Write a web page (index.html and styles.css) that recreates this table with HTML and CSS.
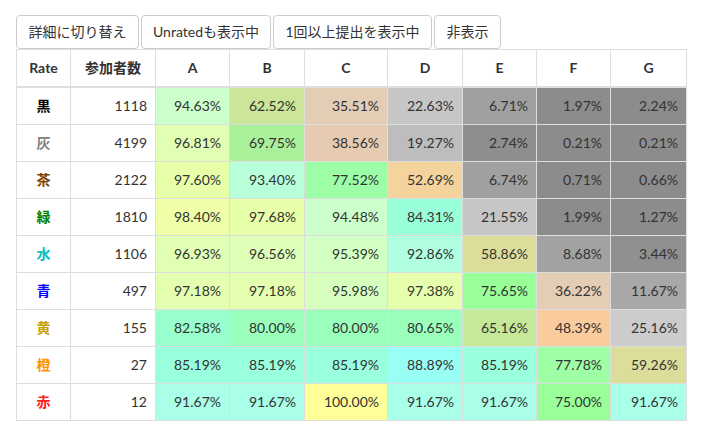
FILE: index.html
```html
<!DOCTYPE html>
<html lang="ja">
<head>
<meta charset="utf-8">
<link rel="stylesheet" href="styles.css">
</head>
<body>
<div class="page">
  <div class="toolbar">
    <button class="btn w1">詳細に切り替え</button>
    <button class="btn w2">Unratedも表示中</button>
    <button class="btn w3">1回以上提出を表示中</button>
    <button class="btn w4">非表示</button>
  </div>
  <table class="stats">
    <colgroup>
      <col class="c-rate"><col class="c-num"><col class="c-a"><col class="c-b"><col class="c-c"><col class="c-d"><col class="c-e"><col class="c-f"><col class="c-g">
    </colgroup>
    <thead>
      <tr><th>Rate</th><th>参加者数</th><th>A</th><th>B</th><th>C</th><th>D</th><th>E</th><th>F</th><th>G</th></tr>
    </thead>
    <tbody>
      <tr><td class="rate r-black">黒</td><td class="num">1118</td>
        <td class="p9463">94.63%</td><td class="p6252">62.52%</td><td class="p3551">35.51%</td><td class="p2263">22.63%</td><td class="p671">6.71%</td><td class="p0">1.97%</td><td class="p0">2.24%</td></tr>
      <tr><td class="rate r-gray">灰</td><td class="num">4199</td>
        <td class="p9681">96.81%</td><td class="p6975">69.75%</td><td class="p3856">38.56%</td><td class="p1927">19.27%</td><td class="p274">2.74%</td><td class="p0">0.21%</td><td class="p0">0.21%</td></tr>
      <tr><td class="rate r-brown">茶</td><td class="num">2122</td>
        <td class="p9760">97.60%</td><td class="p9340">93.40%</td><td class="p7752">77.52%</td><td class="p5269">52.69%</td><td class="p671">6.74%</td><td class="p0">0.71%</td><td class="p0">0.66%</td></tr>
      <tr><td class="rate r-green">緑</td><td class="num">1810</td>
        <td class="p9840">98.40%</td><td class="p9760">97.68%</td><td class="p9463">94.48%</td><td class="p8431">84.31%</td><td class="p2263">21.55%</td><td class="p0">1.99%</td><td class="p0">1.27%</td></tr>
      <tr><td class="rate r-cyan">水</td><td class="num">1106</td>
        <td class="p9681">96.93%</td><td class="p9656">96.56%</td><td class="p9539">95.39%</td><td class="p9286">92.86%</td><td class="p5886">58.86%</td><td class="p868">8.68%</td><td class="p344">3.44%</td></tr>
      <tr><td class="rate r-blue">青</td><td class="num">497</td>
        <td class="p9718">97.18%</td><td class="p9718">97.18%</td><td class="p9598">95.98%</td><td class="p9738">97.38%</td><td class="p7565">75.65%</td><td class="p3551">36.22%</td><td class="p1167">11.67%</td></tr>
      <tr><td class="rate r-yellow">黄</td><td class="num">155</td>
        <td class="p8258">82.58%</td><td class="p8000">80.00%</td><td class="p8000">80.00%</td><td class="p8000">80.65%</td><td class="p6516">65.16%</td><td class="p4839">48.39%</td><td class="p2516">25.16%</td></tr>
      <tr><td class="rate r-orange">橙</td><td class="num">27</td>
        <td class="p8519">85.19%</td><td class="p8519">85.19%</td><td class="p8519">85.19%</td><td class="p8889">88.89%</td><td class="p8519">85.19%</td><td class="p7778">77.78%</td><td class="p5886">59.26%</td></tr>
      <tr><td class="rate r-red">赤</td><td class="num">12</td>
        <td class="p9167">91.67%</td><td class="p9167">91.67%</td><td class="p10000">100.00%</td><td class="p9167">91.67%</td><td class="p9167">91.67%</td><td class="p7565">75.00%</td><td class="p9167">91.67%</td></tr>
    </tbody>
  </table>
</div>
</body>
</html>
```

FILE: styles.css
```css
html, body {
  margin: 0;
  padding: 0;
  background: #fff;
}
body {
  font-family: Lato, "Noto Sans CJK JP", sans-serif;
  font-size: 14px;
  line-height: 20px;
  color: #333;
}
.page {
  padding: 15px 0 0 16px;
}
.toolbar {
  display: flex;
  gap: 2px;
  height: 34px;
}
.btn {
  box-sizing: border-box;
  height: 34px;
  padding: 6px 0;
  font-family: Lato, "Noto Sans CJK JP", sans-serif;
  font-size: 14px;
  line-height: 20px;
  color: #333;
  background: #fff;
  border: 1px solid #ccc;
  border-radius: 4px;
  text-align: center;
}
.w1 { width: 123px; }
.w2 { width: 130px; }
.w3 { width: 159px; }
.w4 { width: 67px; }

.stats {
  border-collapse: collapse;
  table-layout: fixed;
  width: 670px;
}
.c-rate { width: 54px; }
.c-num { width: 85px; }
.c-a { width: 74px; }
.c-b { width: 75px; }
.c-c { width: 83px; }
.c-d { width: 75px; }
.c-e { width: 74px; }
.c-f { width: 74px; }
.c-g { width: 76px; }

.stats th, .stats td {
  border: 1px solid #ddd;
  padding: 8px;
  line-height: 20px;
  white-space: nowrap;
}
.stats th {
  text-align: center;
  font-weight: bold;
  border-bottom-width: 2px;
}
.stats td {
  text-align: right;
}
.stats td.rate {
  text-align: center;
  font-weight: bold;
}
.r-black { color: #000; }
.r-gray { color: #808080; }
.r-brown { color: #804000; }
.r-green { color: #008000; }
.r-cyan { color: #00c0c0; }
.r-blue { color: #0000ff; }
.r-yellow { color: #c8a000; }
.r-orange { color: #ff9000; }
.r-red { color: #ff2020; }

.p10000 { background: #ffff99; }
.p9840 { background: #eeffa8; }
.p9760 { background: #e8ffaa; }
.p9738 { background: #e6ffad; }
.p9718 { background: #e4ffb0; }
.p9681 { background: #e0ffb4; }
.p9656 { background: #ddffb8; }
.p9598 { background: #d6ffbe; }
.p9539 { background: #d2ffc2; }
.p9463 { background: #ccffcc; }
.p9340 { background: #b6ffd9; }
.p9286 { background: #b0ffe0; }
.p9167 { background: #aaffe8; }
.p8889 { background: #99fff5; }
.p8519 { background: #99ffdd; }
.p8431 { background: #99ffd8; }
.p8258 { background: #99ffcc; }
.p8000 { background: #99ffbb; }
.p7778 { background: #9fffa6; }
.p7752 { background: #9cffa8; }
.p7565 { background: #99ff99; }
.p6975 { background: #aaf09a; }
.p6516 { background: #c6e899; }
.p6252 { background: #cce699; }
.p5886 { background: #dddd9b; }
.p5269 { background: #f5d39c; }
.p4839 { background: #facb9c; }
.p3856 { background: #e6cbb1; }
.p3551 { background: #e3cdb5; }
.p2516 { background: #cccccc; }
.p2263 { background: #c6c6c6; }
.p1927 { background: #bdbdbd; }
.p1167 { background: #a8a8a8; }
.p868 { background: #a2a2a2; }
.p671 { background: #a0a0a0; }
.p344 { background: #909090; }
.p274 { background: #8e8e8e; }
.p0 { background: #8c8c8c; }
```
